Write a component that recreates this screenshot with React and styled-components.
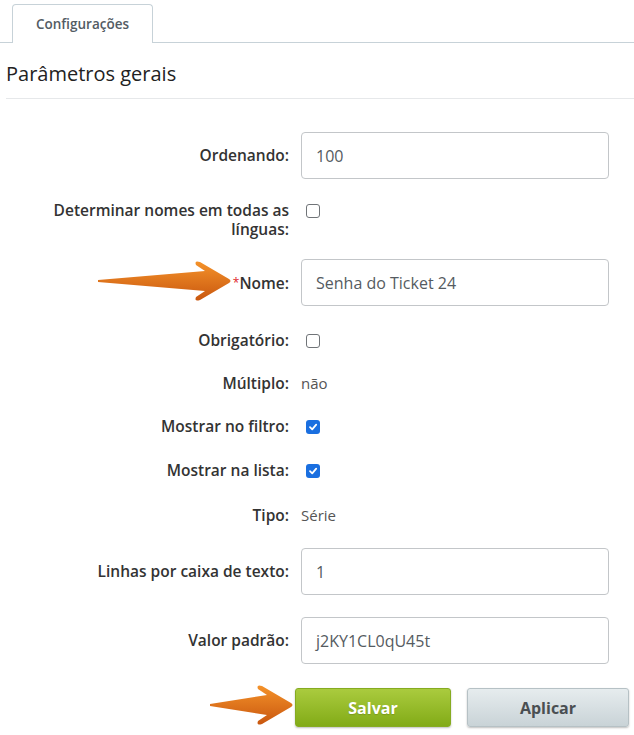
import React from 'react';
import styled, { createGlobalStyle } from 'styled-components';

const GlobalStyle = createGlobalStyle`
  body {
    margin: 0;
    background: #ffffff;
    font-family: 'Open Sans', 'Noto Sans', sans-serif;
  }
`;

const Page = styled.div`
  position: relative;
  width: 634px;
  height: 735px;
  overflow: hidden;
`;

const TabBar = styled.div`
  display: flex;
  padding: 4px 0 0 12px;
  border-bottom: 1px solid #c7d2d8;
  height: 38px;
`;

const Tab = styled.div`
  width: 139px;
  height: 38px;
  margin-bottom: -1px;
  display: flex;
  align-items: center;
  justify-content: center;
  background: #ffffff;
  border: 1px solid #c7d2d8;
  border-bottom: none;
  border-radius: 4px 4px 0 0;
  font-size: 13.5px;
  font-weight: 600;
  color: #535c64;
`;

const Content = styled.div`
  margin-left: 6px;
`;

const Heading = styled.h2`
  margin: 17px 0 0;
  padding-bottom: 10px;
  border-bottom: 1px solid #e6e8ea;
  font-size: 20px;
  line-height: 28px;
  font-weight: 400;
  color: #222;
`;

const Form = styled.div`
  display: flex;
  flex-direction: column;
  gap: 20px;
  padding-top: 33px;
`;

const Row = styled.div`
  display: flex;
  align-items: ${(p) => (p.$top ? 'flex-start' : 'center')};
  gap: 12px;
  padding-left: 44px;
  min-height: 23px;
  margin-top: ${(p) => p.$mt || 0}px;
`;

const Label = styled.div`
  width: 239px;
  flex-shrink: 0;
  text-align: right;
  font-size: 15.5px;
  line-height: 19px;
  font-weight: 600;
  color: #333;
`;

const Required = styled.span`
  color: #e0252b;
  font-size: 12px;
  font-weight: 400;
  vertical-align: 2px;
`;

const TextInput = styled.div`
  box-sizing: border-box;
  width: 308px;
  height: 47px;
  display: flex;
  align-items: center;
  padding-left: 14px;
  border: 1px solid #c3c6c9;
  border-radius: 4px;
  font-size: 16px;
  color: #555b61;
`;

const Value = styled.div`
  font-size: 15px;
  line-height: 19px;
  color: #555;
`;

const Box = styled.span`
  box-sizing: border-box;
  width: 14px;
  height: 14px;
  margin: ${(p) => (p.$top ? '3px' : '0')} 0 0 5px;
  display: flex;
  align-items: center;
  justify-content: center;
  border-radius: 3px;
  border: ${(p) => (p.$checked ? 'none' : '1.5px solid #707478')};
  background: ${(p) => (p.$checked ? '#1a6fe0' : '#fff')};
`;

const ButtonBar = styled.div`
  display: flex;
  gap: 16px;
  padding-left: 289px;
  margin-top: 4px;
`;

const Button = styled.div`
  box-sizing: border-box;
  height: 39px;
  width: ${(p) => p.$width}px;
  display: flex;
  align-items: center;
  justify-content: center;
  border-radius: 3px;
  font-size: 16px;
  font-weight: 700;
  box-shadow: 0 1px 2px rgba(0, 0, 0, 0.25);
  color: ${(p) => (p.$primary ? '#ffffff' : '#4a4f52')};
  border: 1px solid ${(p) => (p.$primary ? '#86ab21' : '#b6c1c5')};
  background: ${(p) =>
    p.$primary
      ? 'linear-gradient(#aacb3e, #82ab17)'
      : 'linear-gradient(#e6ecee, #c9d3d7)'};
  text-shadow: ${(p) => (p.$primary ? '0 1px 1px rgba(0,0,0,0.15)' : 'none')};
`;

const ArrowWrap = styled.svg`
  position: absolute;
  left: ${(p) => p.$x}px;
  top: ${(p) => p.$y}px;
`;

const Checkbox = ({ checked, top }) => (
  <Box $checked={checked} $top={top}>
    {checked && (
      <svg width="10" height="10" viewBox="0 0 10 10">
        <path d="M2 5.2 L4.2 7.3 L8.2 2.6" fill="none" stroke="#fff" strokeWidth="1.8" strokeLinecap="round" strokeLinejoin="round" />
      </svg>
    )}
  </Box>
);

const Arrow = ({ x, y, length, id }) => {
  const L = length;
  const d = `M2 21 L${L - 27} 12 L${L - 36} 6 Q${L - 38} 1 ${L - 32} 3 L${L - 3} 20 Q${L} 22 ${L - 3} 24 L${L - 32} 41 Q${L - 38} 43 ${L - 36} 38 L${L - 27} 32 L2 23 Z`;
  return (
    <ArrowWrap $x={x} $y={y} width={L} height={44} viewBox={`0 0 ${L} 44`}>
      <defs>
        <linearGradient id={id} x1="0" y1="0" x2="0" y2="1">
          <stop offset="0" stopColor="#f4922a" />
          <stop offset="1" stopColor="#c9570f" />
        </linearGradient>
      </defs>
      <path d={d} fill={`url(#${id})`} />
    </ArrowWrap>
  );
};

const App = () => {
  return (
    <Page>
      <GlobalStyle />
      <TabBar>
        <Tab>Configurações</Tab>
      </TabBar>
      <Content>
        <Heading>Parâmetros gerais</Heading>
        <Form>
          <Row>
            <Label>Ordenando:</Label>
            <TextInput>100</TextInput>
          </Row>
          <Row $top $mt={2}>
            <Label>Determinar nomes em todas as línguas:</Label>
            <Checkbox top />
          </Row>
          <Row>
            <Label>
              <Required>*</Required>Nome:
            </Label>
            <TextInput>Senha do Ticket 24</TextInput>
          </Row>
          <Row $mt={3}>
            <Label>Obrigatório:</Label>
            <Checkbox />
          </Row>
          <Row>
            <Label>Múltiplo:</Label>
            <Value>não</Value>
          </Row>
          <Row>
            <Label>Mostrar no filtro:</Label>
            <Checkbox checked />
          </Row>
          <Row $mt={1}>
            <Label>Mostrar na lista:</Label>
            <Checkbox checked />
          </Row>
          <Row $mt={2}>
            <Label>Tipo:</Label>
            <Value>Série</Value>
          </Row>
          <Row $mt={1}>
            <Label>Linhas por caixa de texto:</Label>
            <TextInput>1</TextInput>
          </Row>
          <Row $mt={2}>
            <Label>Valor padrão:</Label>
            <TextInput>j2KY1CL0qU45t</TextInput>
          </Row>
          <ButtonBar>
            <Button $primary $width={156}>Salvar</Button>
            <Button $width={162}>Aplicar</Button>
          </ButtonBar>
        </Form>
      </Content>
      <Arrow id="a1" x={96} y={259} length={136} />
      <Arrow id="a2" x={208} y={683} length={86} />
    </Page>
  );
};

export default App;
